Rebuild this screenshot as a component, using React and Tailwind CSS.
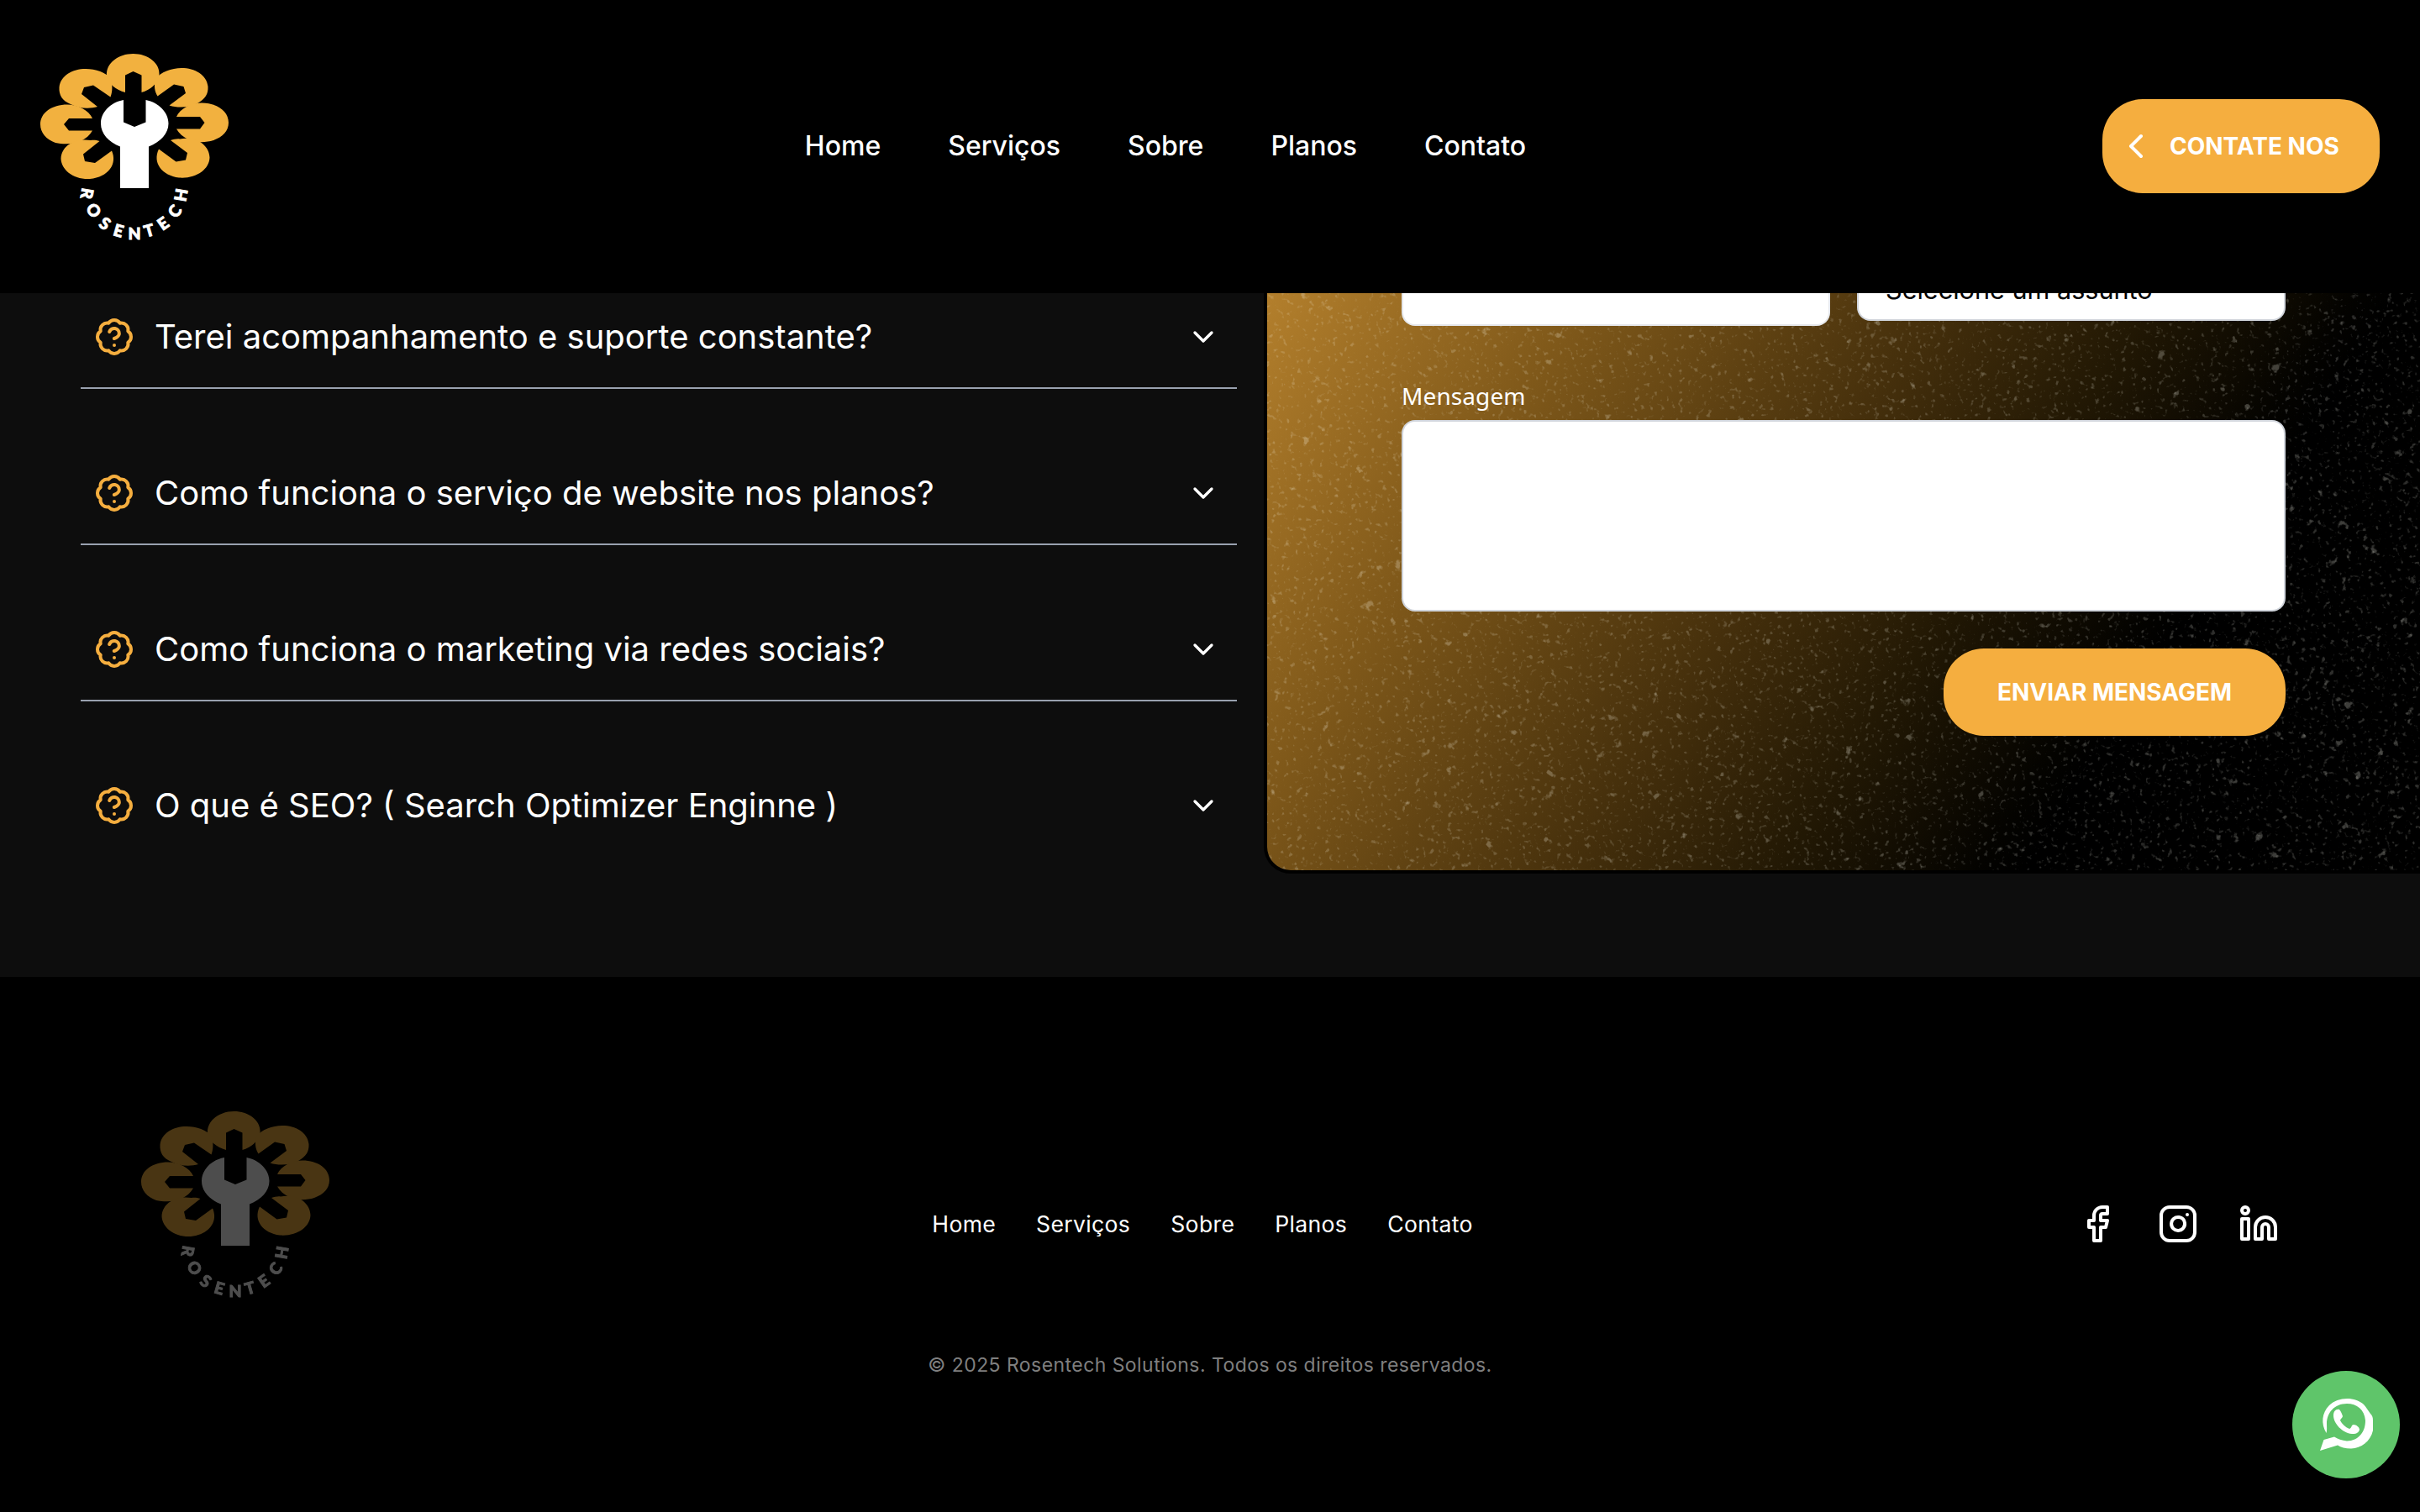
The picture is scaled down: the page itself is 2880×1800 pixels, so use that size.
import { BadgeQuestionMark, ChevronDown, ChevronLeft, Facebook, Instagram, Linkedin } from "lucide-react";

const NAV = ["Home", "Serviços", "Sobre", "Planos", "Contato"];
const FAQ = [
  "Terei acompanhamento e suporte constante?",
  "Como funciona o serviço de website nos planos?",
  "Como funciona o marketing via redes sociais?",
  "O que é SEO? ( Search Optimizer Enginne )",
];
const ROW_FRAMES = [
  "h-[114px] border-b-2",
  "h-[186px] border-b-2 pt-[72px]",
  "h-[186px] border-b-2 pt-[72px]",
  "h-[184px] pt-[72px]",
];

const LETTERS = [
  ["R", 73.5, 190.5, 100],
  ["O", 81.5, 210.5, 55],
  ["S", 95, 226, 35],
  ["E", 111, 234.5, 16],
  ["N", 130, 238, 0],
  ["T", 147.5, 234.5, -16],
  ["E", 164, 226, -35],
  ["C", 178, 211.5, -55],
  ["H", 185.5, 192, -80],
];

const PETALS = [
  "M119 70V49.5L128.500 45L138.500 49.500V70C149 67 157 60 159.500 50C161 35 146 24 128.500 24S96 35 97 50C99 60 108 67 119 70Z",
  "M101.500 75.500L81 61.500L70 64L67 72L86 87C76 90 63 89 54 84C44 80 40 73 40.500 64C42 50 56 42 72 42C84 42 96 46 102 54C104 62 104 69 101.500 75.500Z",
  "M80 101H52L46 108L52 115.500H80C77 121 72 125 66 128C58 132 45 132 36 130C25 126 18 118 18 108C18 94 32 84.500 50 84.500C62 84.500 76 91 80 101Z",
  "M88.500 128L69 143.500L71 152L83 154L103 139.500C110 155 99 171 77 173C57 174 43 162 42.500 149C43 134 58 124 78 127C82 126.500 85 127 88.500 128Z",
  "M157.500 74.500L177 60.500L188.500 63L191 71L171.500 85.500C182 89 196 88 205 83C214 78 218 72 217.500 63C216 49 202 41 186 41C174 41 161 46 155 54C153 62 154 69 157.500 74.500Z",
  "M180 99H208L213.500 106L208 113.500H180C183 119 188 123 194 126C202 130 215 130 224 127C235 123 242 116 242 106C242 92 228 82.500 210 82.500C198 82.500 184 89 180 99Z",
  "M173 127L193 142L191 150.500L179.500 152.500L159 137.500C151 154 163 169 183 171.500C203 173 219 162 219.500 147.500C219 133 204 122 184 125.500C180 125 177 126 173 127Z",
];

function Logo({ className }) {
  return (
    <svg viewBox="0 0 260 260" className={className} role="img" aria-label="Rosentech">
      <g fill="#f2b13f">
        {PETALS.map((d) => <path key={d} d={d} />)}
      </g>
      <path fill="#fff" d="M117 79V105.500L130 111L143.500 105.500V79C159 82 170.500 94 170.500 107C170.500 119 161 129 147 134.500V184H113V134.500C99 129 90 119 90 107C90 94 101 82 117 79Z" />
      <g fill="#fff" stroke="#fff" strokeWidth="0.9" fontFamily="Lato, sans-serif" fontWeight="900" fontSize="19.500" textAnchor="middle">
        {LETTERS.map(([c, x, y, r], i) => (
          <text key={i} transform={`translate(${x} ${y}) rotate(${r})`} y="7">{c}</text>
        ))}
      </g>
    </svg>
  );
}

function Speckles() {
  return (
    <svg className="absolute inset-0 size-full" aria-hidden="true">
      <filter id="dust" x="0" y="0" width="100%" height="100%" colorInterpolationFilters="sRGB">
        <feTurbulence type="fractalNoise" baseFrequency="0.19" numOctaves="2" seed="8" />
        <feColorMatrix values="0 0 0 0 1  0 0 0 0 1  0 0 0 0 0.950  5 3 0 0 -4.650" />
      </filter>
      <filter id="flakes" x="0" y="0" width="100%" height="100%" colorInterpolationFilters="sRGB">
        <feTurbulence type="fractalNoise" baseFrequency="0.085" numOctaves="4" seed="21" />
        <feColorMatrix values="0 0 0 0 1  0 0 0 0 1  0 0 0 0 0.950  7 4 0 0 -7.250" />
      </filter>
      <g transform="rotate(27)">
        <rect x="-100" y="-800" width="1900" height="1600" filter="url(#dust)" opacity="0.18" />
        <rect x="-100" y="-800" width="1900" height="1600" filter="url(#flakes)" opacity="0.24" />
      </g>
    </svg>
  );
}

function WhatsAppMark() {
  return (
    <svg viewBox="0 0 128 128" className="size-32">
      <path fill="#fff" fillRule="evenodd" d="M40.500 74C34 63 35 50 44 41C54 31 74 30 85 40C88 43 90 47 93 51C95 53 96 55 96 59V71C93 84 82 92 70 92.500C63 92.500 58 91 54 88.500L33 95L37.500 82L50 78.500C54 81 59 83 65 83.500C79 83 87 73 87 59C86 46 77 39 65 39C50 39 41 50 41 63C41 67 41.500 71 40.500 74Z" />
      <path fill="#fff" d="M49 53C49 48 52 45 56 46C58 48 59 51 60 54C60 56 57 57 57 59C59 63 63 67 68 69C71 68 70 64 73 64C76 64 80 67 80 70C79 74 75 75.500 71 75C60 74 49 63 49 53Z" />
    </svg>
  );
}

export default function App() {
  return (
    <div className="flex h-[1800px] w-[2880px] flex-col overflow-hidden bg-black font-['Inter',sans-serif] text-white">
      <header className="flex h-[349px] shrink-0 items-center justify-between px-12 pb-px">
        <div className="w-56">
          <Logo className="-ml-[18px] -mt-2 size-[260px]" />
        </div>
        <nav className="flex gap-20 text-[32px] font-medium">
          {NAV.map((n) => <a key={n}>{n}</a>)}
        </nav>
        <button className="flex h-28 w-[330px] items-center rounded-[48px] bg-[#f5ae3f] pl-4 text-[28px] font-bold">
          <ChevronLeft className="size-12" />
          <span className="ml-4">CONTATE NOS</span>
        </button>
      </header>

      <main className="flex h-[814px] shrink-0 bg-[#0d0d0d]">
        <section className="ml-24 w-[1376px] shrink-0">
          {FAQ.map((q, i) => (
            <div key={q} className={`flex items-center border-[#99a1af] pb-2 pl-4 pr-5 ${ROW_FRAMES[i]}`}>
              <BadgeQuestionMark className="size-12 text-[#f5ae3f]" />
              <span className="ml-6 flex-1 text-[40px] leading-[56px]">{q}</span>
              <ChevronDown className="size-10" />
            </div>
          ))}
        </section>

        <section className="relative ml-8 h-[691px] w-[1400px] shrink-0 overflow-hidden rounded-bl-[32px] border-b-4 border-l-4 border-black bg-[linear-gradient(123deg,#b37f2c_0%,#80591a_20.5%,#46300c_43.4%,#221804_57.3%,#040300_70%,#000_73%)]">
          <Speckles />
          <div className="relative ml-40 w-[1052px]">
            <div className="flex items-start gap-8">
              <div className="h-[39px] w-[510px] rounded-b-2xl border-2 border-t-0 border-gray-200 bg-white" />
              <div className="flex h-[33px] w-[510px] items-end overflow-hidden rounded-b-2xl border-2 border-t-0 border-gray-300 bg-white pb-4 pl-8 text-[30.6px] leading-[38px] text-black">Selecione um assunto</div>
            </div>
            <label className="mt-[63px] block h-[42px] font-['Noto_Sans',sans-serif] text-[28px] leading-10 tracking-[0.1px]">Mensagem</label>
            <div className="mt-[7px] h-[228px] rounded-2xl border-2 border-gray-300 bg-white" />
            <button className="ml-auto mt-11 block h-[104px] w-[407px] rounded-[48px] bg-[#f5ae3f] text-[28px] font-bold">ENVIAR MENSAGEM</button>
          </div>
        </section>
      </main>

      <footer className="flex flex-1 flex-col items-center pt-[136px]">
        <div className="grid w-full grid-cols-[1fr_auto_1fr] items-center pl-[150px] pr-[168px]">
          <Logo className="size-[260px] opacity-30" />
          <nav className="mt-[58px] flex gap-12 text-[26.6px] tracking-[0.32px]">
            {NAV.map((n) => <a key={n}>{n}</a>)}
          </nav>
          <div className="mt-14 flex gap-12 justify-self-end">
            <Facebook className="size-12" />
            <Instagram className="size-12" />
            <Linkedin className="size-12" />
          </div>
        </div>
        <p className="mt-[50px] text-[23px] leading-8 tracking-[0.44px] text-[#7f7f7f]">© 2025 Rosentech Solutions. Todos os direitos reservados.</p>
      </footer>

      <a className="fixed bottom-10 right-6 size-32 rounded-full bg-[#5fc56a]">
        <WhatsAppMark />
      </a>
    </div>
  );
}
